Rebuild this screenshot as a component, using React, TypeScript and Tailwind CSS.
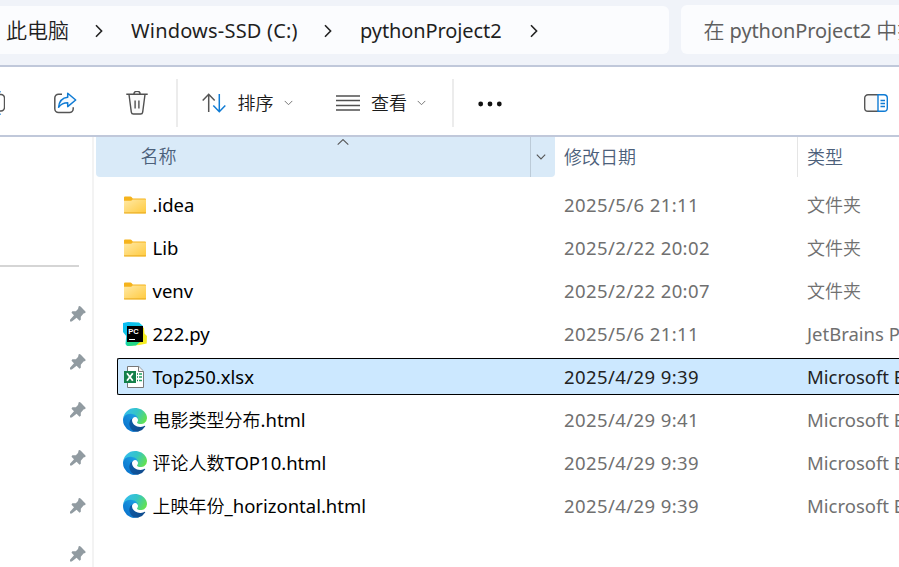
import React from "react";

const CJK = /([\u3000-\u9fff]+)/;

/* Chinese runs have their own size and face beside the Latin text. */
function Label({ text, large = false }: { text: string; large?: boolean }) {
  const size = large ? "text-[21px]" : "text-[18px]";
  return (
    <>
      {text.split(CJK).map((part, i) =>
        CJK.test(part) ? (
          <span key={i} className={`font-['Noto_Sans_CJK_SC',sans-serif] font-[350] leading-none tracking-normal ${size}`}>
            {part}
          </span>
        ) : (
          <span key={i}>{part}</span>
        ),
      )}
    </>
  );
}

function Chevron({ className }: { className: string }) {
  return (
    <svg className={className} viewBox="0 0 8 14" fill="none" stroke="#222" strokeWidth="1.6">
      <path d="M1 1.2 6.6 7 1 12.8" />
    </svg>
  );
}

function Caret({ className, stroke = "#777" }: { className: string; stroke?: string }) {
  return (
    <svg className={className} viewBox="0 0 10 6" fill="none" stroke={stroke} strokeWidth="1.1">
      <path d="M.8.7 5 4.9 9.2.7" />
    </svg>
  );
}

function ShareIcon() {
  return (
    <svg className="h-6 w-6 shrink-0" viewBox="0 0 24 24" fill="none" strokeWidth="1.5">
      <path d="M9 3.2H5.5a3.7 3.7 0 0 0-3.7 3.7v10.900a3.700 3.700 0 0 0 3.700 3.700h11a3.700 3.700 0 0 0 3.700-3.700v-1.600" stroke="#555" />
      <path d="M14.700 2.200 22.700 9l-8 6.600v-3.900c-4 0-6.500 1-9.100 4.500.6-6 3.800-9.500 9.100-10Z" stroke="#0f7bd4" strokeLinejoin="round" fill="#f5faff" />
    </svg>
  );
}

function TrashIcon() {
  return (
    <svg className="h-6 w-[22px] shrink-0" viewBox="0 0 22 24" fill="none" stroke="#505050" strokeWidth="1.4">
      <path d="M3 3.500 5.300 21.100a2.200 2.200 0 0 0 2.200 1.900h7a2.200 2.200 0 0 0 2.200-1.900L19 3.500" fill="#fafafa" />
      <path d="M.3 3.300h21.400M7.800 3.200a3.200 3 0 0 1 6.400 0M9.100 9.500v8M12.900 9.500v8" />
    </svg>
  );
}

function SortIcon() {
  return (
    <svg className="h-5 w-6 shrink-0" viewBox="0 0 24 20" fill="none" strokeWidth="1.500">
      <path d="M6.700 19V1.500M.700 7.600l6-6.300 6 6.300" stroke="#555" />
      <path d="M17.300 1v17.500M11.300 12.400l6 6.300 6-6.300" stroke="#0f7bd4" />
    </svg>
  );
}

function FolderIcon({ id }: { id: string }) {
  return (
    <svg className="h-[18px] w-6 shrink-0" viewBox="0 0 24 18">
      <defs>
        <linearGradient id={id} x1="0" y1="0" x2="1" y2="1">
          <stop offset="0" stopColor="#ffe9a6" />
          <stop offset="1" stopColor="#ffca3e" />
        </linearGradient>
      </defs>
      <path d="M1 1.500Q1 .500 2 .500h5.500q.6 0 1 .5l1.300 1.500H22q1 0 1 1V8H1Z" fill="#f5b31c" />
      <path d="M1 4.800h7.200L9.600 3.400H23V16.500q0 .900-1 .900H2q-1 0-1-.9Z" fill={`url(#${id})`} />
      <path d="M1 16.900h22" stroke="#e9aa20" strokeWidth="1" />
    </svg>
  );
}

function PyCharmIcon() {
  return (
    <svg className="h-6 w-6 shrink-0" viewBox="0 0 24 24">
      <defs>
        <linearGradient id="pc" x1="0" y1="0" x2=".5" y2="1">
          <stop offset="0" stopColor="#08b9f5" />
          <stop offset=".6" stopColor="#12cbe0" />
          <stop offset="1" stopColor="#21d789" />
        </linearGradient>
      </defs>
      <path d="m0 1 5-1 11 .5 4 3.500V20l-11 3.500L4 24 2.500 22 3.200 14 0 10Z" fill="url(#pc)" />
      <path d="m18 4 3 2 .5 5.500L24 14l-.3 7.500-7.200 1.500-8 .5 6-7.500Z" fill="#f3ec22" />
      <path d="m3 18 2 6 8-.5 4-3.500H4Z" fill="#21d789" />
      <rect x="4" y="4" width="16" height="16" fill="#000" />
      <text x="5.300" y="11.700" fill="#fff" fontSize="7.500" fontWeight="700" fontFamily="Liberation Sans, sans-serif">PC</text>
      <path d="M6 17.500h6" stroke="#fff" strokeWidth="1" />
    </svg>
  );
}

function ExcelIcon() {
  return (
    <svg className="h-6 w-6 shrink-0" viewBox="0 0 24 24">
      <path d="M4.500 1.500h11.300l4.700 4.700v16.300h-16Z" fill="#fff" stroke="#787878" strokeWidth="1" />
      <path d="M15.500 1.500v5h5" fill="#f6f6f6" stroke="#787878" />
      <path d="M1 6h12v12H1Z" fill="#15804a" />
      <path d="m4 8.300 5.800 7.400M9.800 8.300 4 15.700" stroke="#fff" strokeWidth="1.800" />
      <path d="M14 9h1M14 12h1M14 15.500h1" stroke="#15804a" strokeWidth="1.500" />
      <path d="M16 9h3M16 12h3M16 15.500h3" stroke="#21a366" strokeWidth="1.500" />
    </svg>
  );
}

function EdgeIcon({ id }: { id: string }) {
  return (
    <svg className="h-6 w-6 shrink-0" viewBox="0 0 256 256">
      <defs>
        <linearGradient id={`${id}a`} x1=".2" y1=".3" x2="1" y2=".8">
          <stop offset="0" stopColor="#0c59a4" />
          <stop offset="1" stopColor="#114a8b" />
        </linearGradient>
        <linearGradient id={`${id}b`} x1=".8" y1=".2" x2=".2" y2="1">
          <stop offset="0" stopColor="#1b9de2" />
          <stop offset=".4" stopColor="#1488d8" />
          <stop offset="1" stopColor="#0870cb" />
        </linearGradient>
        <linearGradient id={`${id}c`} x1="0" y1=".3" x2="1" y2=".7">
          <stop offset="0" stopColor="#35bdf0" />
          <stop offset=".5" stopColor="#35c5c4" />
          <stop offset="1" stopColor="#66e34a" />
        </linearGradient>
      </defs>
      <path fill={`url(#${id}a)`} d="M231.070 190.540a93.700 93.700 0 0 1-10.540 4.710 101.870 101.870 0 0 1-35.900 6.460c-47.320 0-88.540-32.550-88.540-74.320A31.480 31.480 0 0 1 112.530 100c-42.800 1.800-53.800 46.400-53.800 72.530 0 73.880 68.090 81.370 82.760 81.370 7.910 0 19.840-2.300 27-4.560l1.310-.44a128.340 128.340 0 0 0 66.600-52.800 4 4 0 0 0-5.330-5.560z" />
      <path fill={`url(#${id}b)`} d="M105.730 241.420A79.200 79.200 0 0 1 83 220.080a80.720 80.720 0 0 1 29.530-120c3.120-1.470 8.450-4.130 15.540-4a32.350 32.350 0 0 1 25.690 13 31.880 31.880 0 0 1 6.360 18.660c0-.21 24.460-79.600-80-79.600-43.900 0-80 41.660-80 78.210a130.150 130.150 0 0 0 12.110 56 128 128 0 0 0 156.380 67.110 75.550 75.550 0 0 1-62.780-8z" />
      <path fill={`url(#${id}c)`} d="M152.330 148.860c-.81 1.050-3.300 2.500-3.300 5.660 0 2.610 1.700 5.120 4.720 7.230 14.380 10 41.490 8.680 41.560 8.680a59.560 59.560 0 0 0 30.270-8.350 61.380 61.380 0 0 0 30.430-52.880c.26-22.410-8-37.310-11.340-43.910C223.460 23.840 177.720 0 128 0A128 128 0 0 0 0 126.200c.48-36.540 36.800-66.050 80-66.050 3.500 0 23.460.34 42 10.070 16.340 8.580 24.900 18.940 30.850 29.210 6.180 10.670 7.280 24.150 7.280 29.520s-2.740 13.330-7.800 19.910z" />
    </svg>
  );
}

function Pin() {
  return (
    <svg className="h-4 w-4 shrink-0" viewBox="0 0 16 16" fill="#919ba1">
      <path d="M8.700.200Q9.800-.2 10.800.8l4.400 4.400q.9 1-.1 1.900l-1.600.5-2.700 3.200v3l-1.300.9-2.900-2.900L1.800 15.500H0v-1.700l4-4.500L1.500 6.800l.8-1.500h3.500L8 3Z" />
    </svg>
  );
}

type Kind = "folder" | "py" | "xlsx" | "html";
const files: { name: string; date: string; type: string; kind: Kind; selected?: boolean }[] = [
  { name: ".idea", date: "2025/5/6 21:11", type: "文件夹", kind: "folder" },
  { name: "Lib", date: "2025/2/22 20:02", type: "文件夹", kind: "folder" },
  { name: "venv", date: "2025/2/22 20:07", type: "文件夹", kind: "folder" },
  { name: "222.py", date: "2025/5/6 21:11", type: "JetBrains PyCharm", kind: "py" },
  { name: "Top250.xlsx", date: "2025/4/29 9:39", type: "Microsoft Excel", kind: "xlsx", selected: true },
  { name: "电影类型分布.html", date: "2025/4/29 9:41", type: "Microsoft Edge", kind: "html" },
  { name: "评论人数TOP10.html", date: "2025/4/29 9:39", type: "Microsoft Edge", kind: "html" },
  { name: "上映年份_horizontal.html", date: "2025/4/29 9:39", type: "Microsoft Edge", kind: "html" },
];

function FileIcon({ kind, id }: { kind: Kind; id: string }) {
  if (kind === "folder") return <FolderIcon id={id} />;
  if (kind === "py") return <PyCharmIcon />;
  if (kind === "xlsx") return <ExcelIcon />;
  return <EdgeIcon id={id} />;
}

export default function App() {
  return (
    <div className="flex h-[567px] w-[899px] flex-col overflow-hidden whitespace-nowrap bg-white font-['Noto_Sans','Noto_Sans_CJK_SC',sans-serif] text-[18.5px] text-black">
      <header className="flex h-[67px] shrink-0 gap-3 border-b-2 border-[#c0c8da] bg-[#f0f3f9]">
        <nav className="mt-1.5 flex h-12 w-[669px] shrink-0 items-center rounded-r-md bg-[#fbfcfe] pl-1.5 pt-0.5 text-[20px] text-[#1f1f1f]">
          <span className="w-[89px] shrink-0"><Label text="此电脑" large /></span>
          <Chevron className="h-3.5 w-2 shrink-0" />
          <span className="ml-7 w-[193px] shrink-0 tracking-[0.2px]">Windows-SSD (C:)</span>
          <Chevron className="h-3.5 w-2 shrink-0" />
          <span className="ml-7 w-[170px] shrink-0 tracking-[-0.1px]">pythonProject2</span>
          <Chevron className="h-3.5 w-2 shrink-0" />
        </nav>
        <div className="mt-[5px] flex h-[49px] w-[230px] shrink-0 items-center rounded-l-md bg-[#fbfcfe] pl-[22.500px] pt-[3px] text-[20px] text-[#5f5f5f]">
          <span className="tracking-[-0.1px]"><Label text="在 pythonProject2 中搜索" large /></span>
        </div>
      </header>

      <div className="flex h-[70px] shrink-0 items-center border-b-2 border-[#c0c8da] pt-1">
        <svg className="h-6 w-[5px] shrink-0" viewBox="0 0 5 24" fill="none" strokeWidth="1.400">
          <path d="M0 3.500h1a3.500 3.500 0 0 1 3.500 3.500v9.500A3.500 3.500 0 0 1 1 20H0" stroke="#555" />
          <path d="M0 .700h1M0 23.300h1" stroke="#6aaee6" />
        </svg>
        <span className="ml-12"><ShareIcon /></span>
        <span className="ml-[49px]"><TrashIcon /></span>
        <span className="ml-[28px] h-12 w-0.5 shrink-0 bg-[#ececec]" />
        <span className="ml-6"><SortIcon /></span>
        <span className="ml-[11.500px] text-[#1b1b1b]"><Label text="排序" /></span>
        <Caret className="ml-2.5 h-1.5 w-[9px] shrink-0" />
        <svg className="ml-[43px] h-4 w-6 shrink-0" viewBox="0 0 24 16" stroke="#505050" strokeWidth="1.300">
          <path d="M0 1h24M0 5.500h24M0 10.500h24M0 15h24" />
        </svg>
        <span className="ml-[11.500px] text-[#1b1b1b]"><Label text="查看" /></span>
        <Caret className="ml-2.5 h-1.5 w-[9px] shrink-0" />
        <span className="ml-[26px] h-12 w-0.5 shrink-0 bg-[#ececec]" />
        <svg className="ml-6 mt-0.5 h-1.5 w-6 shrink-0" viewBox="0 0 24 6" fill="#111">
          <circle cx="2.700" cy="3" r="2.400" /><circle cx="12" cy="3" r="2.400" /><circle cx="21.300" cy="3" r="2.400" />
        </svg>
        <svg className="ml-auto mr-[11px] h-[18px] w-6 shrink-0" viewBox="0 0 24 18" fill="none" strokeWidth="1.400">
          <path d="M14 .700H4A3.300 3.300 0 0 0 .700 4v10A3.300 3.300 0 0 0 4 17.300h10" stroke="#555" fill="#fafafa" />
          <path d="M14 .700h6A3.300 3.300 0 0 1 23.300 4v10a3.300 3.300 0 0 1-3.300 3.300h-6ZM16.500 6.500h4.500M16.500 9.500h4.500M16.500 12.500h4.500" stroke="#0f7bd4" />
        </svg>
      </div>

      <main className="flex min-h-0 flex-1">
        <aside className="flex w-[94px] shrink-0 flex-col border-r-2 border-[#f3f3f3]">
          <span className="mt-32 h-0.5 w-[79px] shrink-0 bg-[#d5d5d5]" />
          <div className="mt-[39px] flex flex-col items-end gap-8 pr-1.5">
            {[0, 1, 2, 3, 4, 5].map((i) => <Pin key={i} />)}
          </div>
        </aside>

        <section className="min-w-0 flex-1 pl-0.5">
          <div className="flex h-10 items-center text-[#4c607a]">
            <div className="relative flex h-full w-[459px] shrink-0 items-center rounded-b-sm bg-[#d9eaf8] pl-[44.500px]">
              <span className="pb-0.5"><Label text="名称" /></span>
              <svg className="absolute left-[241px] top-0.5 h-1.5 w-3" viewBox="0 0 12 6" fill="none" stroke="#555" strokeWidth="1.100"><path d="M.700 5.600 6 .600l5.300 5" /></svg>
              <span className="ml-auto flex h-full w-[25px] items-center justify-center border-l border-[#bccbd8]">
                <Caret className="h-1.5 w-2.5 -ml-1" stroke="#555" />
              </span>
            </div>
            <span className="flex h-full w-[243px] shrink-0 items-center border-r border-[#e5e5e5] pb-0.5 pl-[9px]"><Label text="修改日期" /></span>
            <span className="flex h-full items-center pb-0.5 pl-[9px]"><Label text="类型" /></span>
          </div>

          <div className="mt-[9px] flex flex-col gap-1.5 pl-[21px]">
            {files.map((f, i) => (
              <div
                key={f.name}
                className={
                  f.selected
                    ? "flex h-[37px] items-center rounded-l-[2px] border border-r-0 border-black bg-[#cce8ff] pl-[5px] text-[#222]"
                    : "flex h-[37px] items-center pl-1.5 text-[#707070]"
                }
              >
                <FileIcon kind={f.kind} id={`i${i}`} />
                <span className="ml-[5.5px] w-[411.5px] shrink-0 text-black"><Label text={f.name} /></span>
                <span className="w-[243px] shrink-0 tracking-[0.4px]">{f.date}</span>
                <span><Label text={f.type} /></span>
              </div>
            ))}
          </div>
        </section>
      </main>
    </div>
  );
}
